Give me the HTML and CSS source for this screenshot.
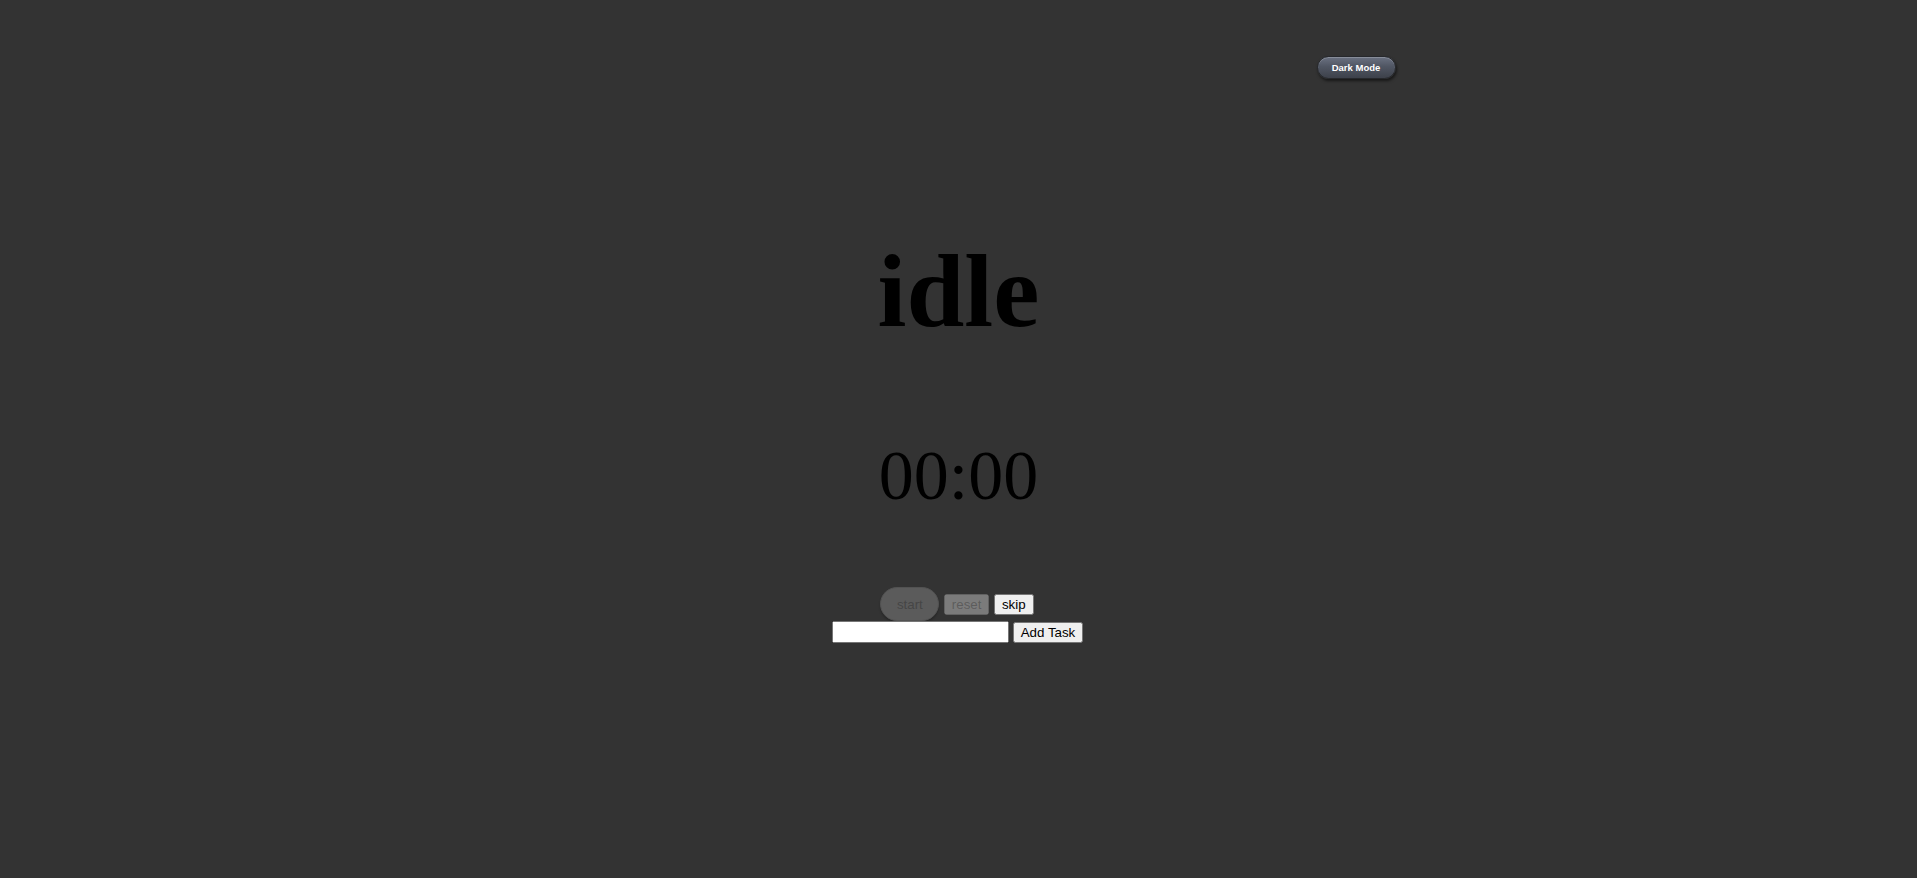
FILE: index.html
```html
<!DOCTYPE html>
<html>
<head>
<meta charset="utf-8">
<title>Pomodoro</title>
<link rel="stylesheet" href="styles.css">
</head>
<body>
<div class="page">
  <div class="topbar">
    <button class="mode">Dark Mode</button>
  </div>
  <h1 class="status">idle</h1>
  <div class="timer">00:00</div>
  <div class="controls">
    <button class="start" disabled>start</button>
    <button class="reset" disabled>reset</button>
    <button class="skip">skip</button>
  </div>
  <div class="tasks">
    <input class="task-input" type="text">
    <button class="add">Add Task</button>
  </div>
</div>
</body>
</html>
```

FILE: styles.css
```css
html, body {
  margin: 0;
  padding: 0;
  background: #333333;
  height: 100%;
}
body {
  font-family: "Liberation Serif", "Times New Roman", serif;
  color: #000;
}
.page {
  text-align: center;
}
.topbar {
  width: 880px;
  margin: 0 auto;
  padding-top: 56px;
  display: flex;
  justify-content: flex-end;
}
.mode {
  width: 79px;
  height: 23px;
  border-radius: 12px;
  border: 1px solid #26282c;
  background: linear-gradient(to bottom, #6b7282 0%, #505663 45%, #3d414a 100%);
  box-shadow: 1px 2px 3px rgba(0,0,0,0.55), inset 0 1px 0 rgba(255,255,255,0.2);
  color: #fff;
  font-family: "Liberation Sans", Arial, sans-serif;
  font-weight: bold;
  font-size: 9.5px;
  padding: 0;
  margin-right: 3px;
}
.status {
  font-size: 104px;
  font-weight: bold;
  margin: 154px 0 0;
  line-height: 115px;
}
.timer {
  font-size: 70px;
  margin-top: 86px;
  line-height: 83px;
}
.controls {
  margin-top: 70px;
  padding-right: 3px;
  font-family: "Liberation Sans", Arial, sans-serif;
}
.controls button, .tasks button, .tasks input {
  font-family: "Liberation Sans", Arial, sans-serif;
  font-size: 13.333px;
}
.start {
  width: 59px;
  height: 34px;
  border-radius: 17px;
  border: 1px solid #525252;
  background: #5b5b5b;
  color: #464646;
  box-shadow: 0 2px 2px rgba(0,0,0,0.22);
  padding: 0;
}
.tasks {
  margin-top: 0;
  padding-right: 2px;
}
.task-input {
  width: 169px;
  height: 16px;
}
```
